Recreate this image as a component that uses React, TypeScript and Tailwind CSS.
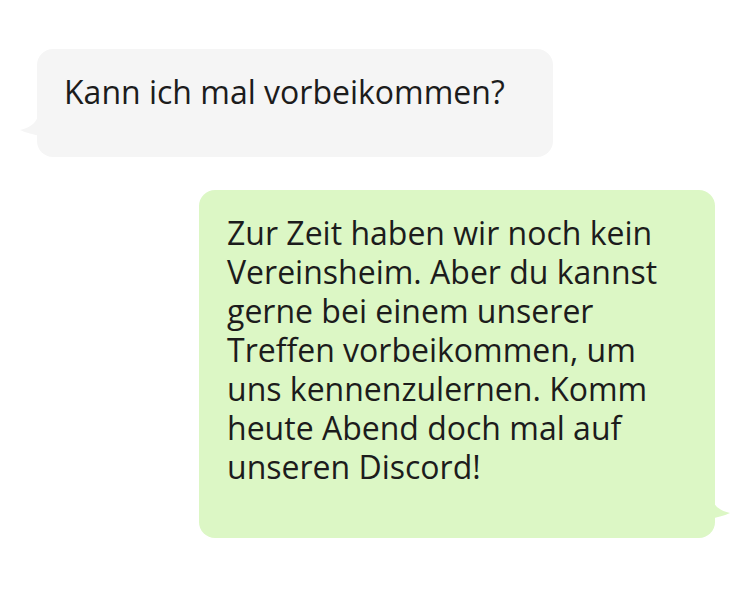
export default function App() {
  return (
    <div
      className="w-[750px] h-[596px] bg-white relative overflow-hidden text-[32px] leading-[39px] text-[#1c1c1c]"
      style={{ fontFamily: '"Open Sans", "Noto Sans", sans-serif' }}
    >
      {/* Incoming message */}
      <div className="pt-[49px] pl-[37px]">
        <div className="relative w-[516px] h-[108px] rounded-[16px] bg-[#f5f5f5] pl-[27px] pt-[23px]">
          <svg
            className="absolute left-[-17px] top-[60px]"
            width="22"
            height="30"
            viewBox="0 0 22 30"
          >
            <path d="M19 0 Q19 17 0 21 Q9 25 22 27 L22 0 Z" fill="#f5f5f5" />
          </svg>
          <p>Kann ich mal vorbeikommen?</p>
        </div>
      </div>

      {/* Outgoing message */}
      <div className="pt-[33px] pl-[199px]">
        <div className="relative w-[516px] h-[348px] rounded-[16px] bg-[#dcf7c5] pl-[28px] pr-[26px] pt-[23px]">
          <svg
            className="absolute right-[-15px] top-[302px]"
            width="22"
            height="30"
            viewBox="0 0 22 30"
          >
            <path d="M3 0 Q3 17 22 21 Q13 25 0 27 L0 0 Z" fill="#dcf7c5" />
          </svg>
          <p>
            Zur Zeit haben wir noch kein Vereinsheim. Aber du kannst gerne bei einem unserer
            Treffen vorbeikommen, um uns kennenzulernen. Komm heute Abend doch mal auf unseren
            Discord!
          </p>
        </div>
      </div>
    </div>
  );
}
